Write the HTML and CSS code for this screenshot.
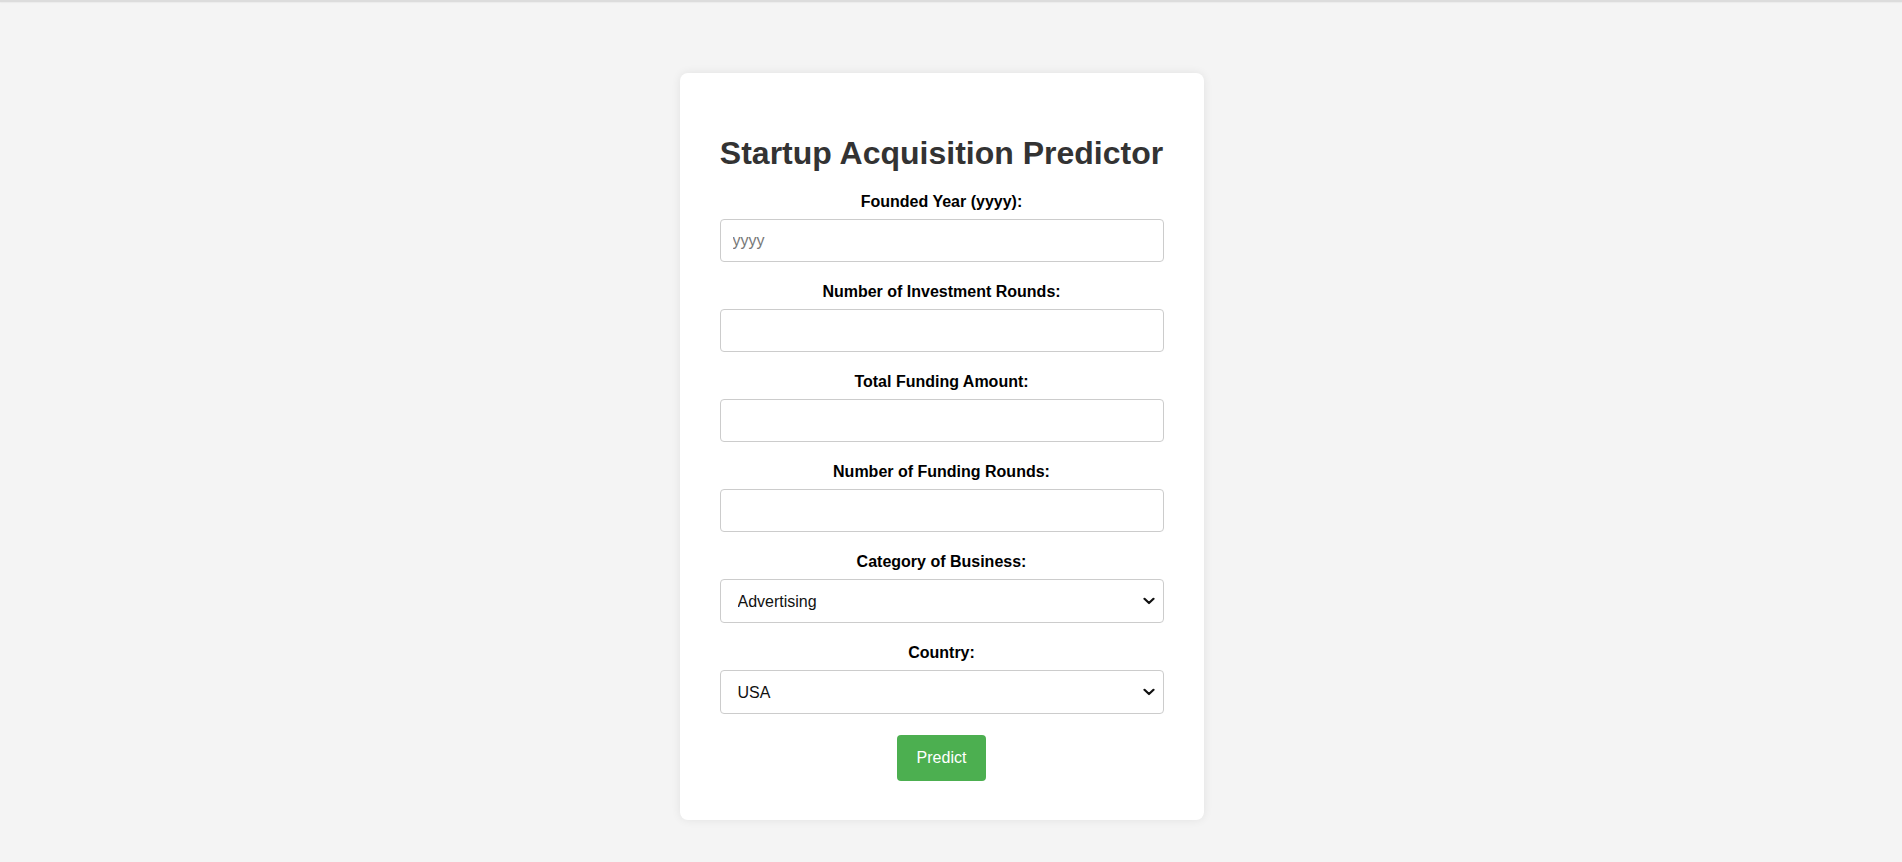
FILE: index.html
```html
<!DOCTYPE html>
<html lang="en">
<head>
<meta charset="utf-8">
<title>Startup Acquisition Predictor</title>
<link rel="stylesheet" href="styles.css">
</head>
<body>
<div class="topline"></div>
<main class="page">
  <form class="card">
    <h1 class="title">Startup Acquisition Predictor</h1>
    <label class="label" for="year">Founded Year (yyyy):</label>
    <input class="field" id="year" type="text" placeholder="yyyy">
    <label class="label" for="inv">Number of Investment Rounds:</label>
    <input class="field" id="inv" type="text">
    <label class="label" for="fund">Total Funding Amount:</label>
    <input class="field" id="fund" type="text">
    <label class="label" for="rounds">Number of Funding Rounds:</label>
    <input class="field" id="rounds" type="text">
    <label class="label" for="cat">Category of Business:</label>
    <div class="select-wrap">
      <select class="field select" id="cat">
        <option>Advertising</option>
      </select>
      <svg class="chev" width="12" height="8" viewBox="0 0 12 8" aria-hidden="true"><path d="M1.5 1.8 L6 6 L10.5 1.8" fill="none" stroke="#111" stroke-width="2.2" stroke-linecap="round" stroke-linejoin="round"/></svg>
    </div>
    <label class="label" for="country">Country:</label>
    <div class="select-wrap">
      <select class="field select" id="country">
        <option>USA</option>
      </select>
      <svg class="chev" width="12" height="8" viewBox="0 0 12 8" aria-hidden="true"><path d="M1.5 1.8 L6 6 L10.5 1.8" fill="none" stroke="#111" stroke-width="2.2" stroke-linecap="round" stroke-linejoin="round"/></svg>
    </div>
    <button class="btn" type="button">Predict</button>
  </form>
</main>
</body>
</html>
```

FILE: styles.css
```css
html, body {
  margin: 0;
  padding: 0;
}
body {
  background: #f4f4f4;
  font-family: "Liberation Sans", Arial, sans-serif;
  min-height: 862px;
}
.topline {
  height: 2px;
  background: #dcdcdc;
  box-shadow: 0 1px 1px #ececec;
}
.page {
  display: flex;
  justify-content: center;
  padding: 71px 19px 0 0;
}
.card {
  box-sizing: border-box;
  width: 524px;
  background: #fff;
  border-radius: 8px;
  box-shadow: 0 0 10px rgba(0, 0, 0, 0.08);
  padding: 40px 40px 39px;
  display: flex;
  flex-direction: column;
  align-items: stretch;
  text-align: center;
}
.title {
  font-size: 32px;
  line-height: 37px;
  font-weight: bold;
  color: #333;
  margin: 22px 0 20px;
}
.label {
  display: block;
  font-size: 16px;
  line-height: 19px;
  font-weight: bold;
  color: #000;
  margin-bottom: 8px;
}
.field {
  box-sizing: border-box;
  width: 100%;
  height: 43px;
  margin: 0 0 20px;
  padding: 0 12px;
  border: 1px solid #ccc;
  border-radius: 4px;
  background: #fff;
  font-family: "Liberation Sans", Arial, sans-serif;
  font-size: 16px;
  color: #000;
}
.field::placeholder {
  color: #777;
}
.select-wrap {
  position: relative;
}
.select {
  -webkit-appearance: none;
  appearance: none;
  height: 44px;
  padding: 0 32px 0 17px;
  color: #111;
}
.chev {
  position: absolute;
  right: 9px;
  top: 18px;
  pointer-events: none;
}
.btn {
  align-self: center;
  margin-top: 1px;
  height: 46px;
  padding: 0 20px;
  border: none;
  border-radius: 4px;
  background: #4caf50;
  color: #fff;
  font-family: "Liberation Sans", Arial, sans-serif;
  font-size: 16px;
  cursor: pointer;
}
```
